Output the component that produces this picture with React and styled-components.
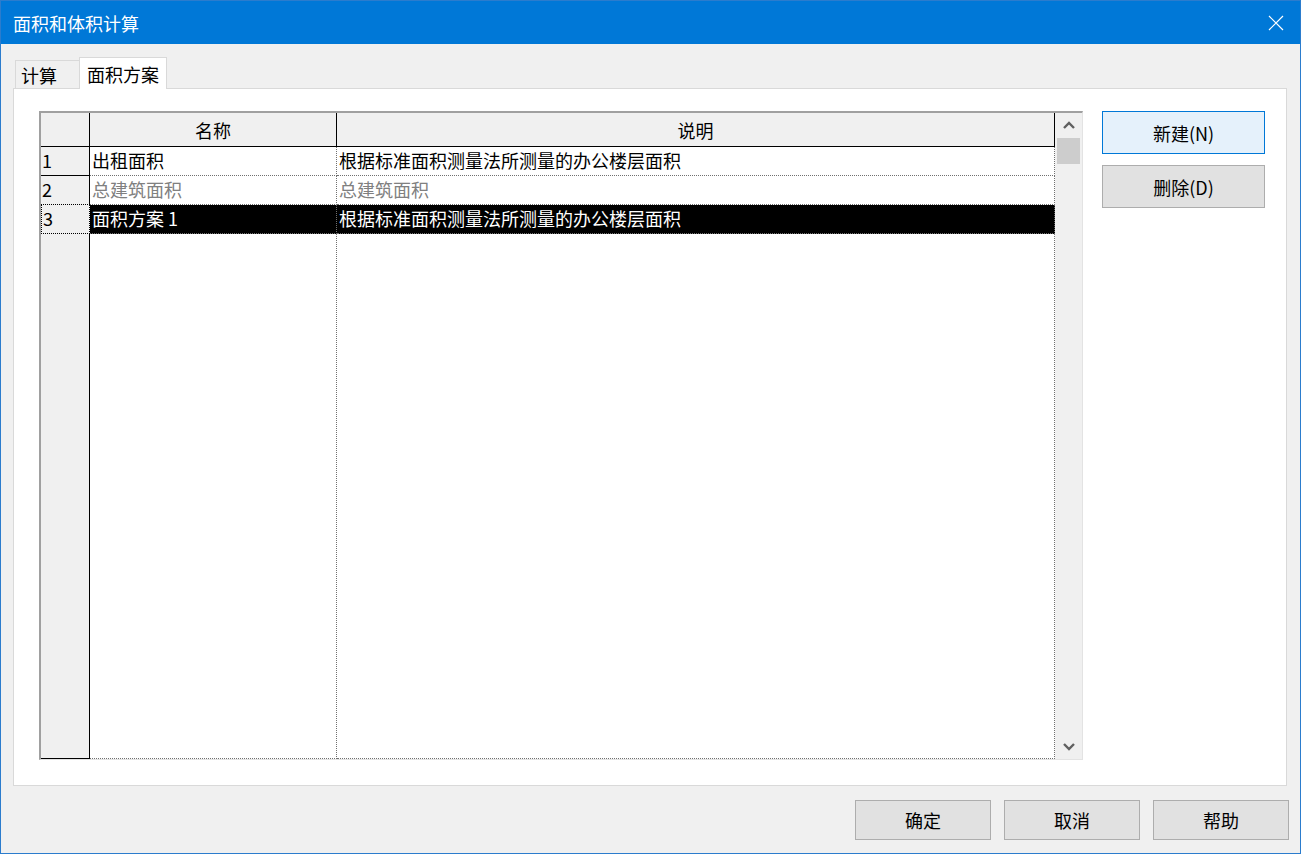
import React from 'react'
import styled, { createGlobalStyle } from 'styled-components'

const GlobalStyle = createGlobalStyle`
  html, body {
    margin: 0;
    padding: 0;
  }
  body {
    font-family: "Noto Sans CJK SC", "Noto Sans", sans-serif;
    font-size: 18px;
    color: #000;
    background: #fff;
  }
`

const Window = styled.div`
  width: 1301px;
  height: 854px;
  box-sizing: border-box;
  border: 1px solid #2b7ccd;
  background: #f0f0f0;
  display: flex;
  flex-direction: column;
`

const TitleBar = styled.div`
  height: 43px;
  background: #0078d7;
  color: #fff;
  display: flex;
  align-items: center;
  justify-content: space-between;
  padding: 0 16px 0 12px;
  font-size: 18px;
  line-height: 1;
`

const Body = styled.div`
  flex: 1;
  display: flex;
  flex-direction: column;
  padding: 13px 13px 13px 12px;
`

const TabStrip = styled.div`
  height: 31px;
  display: flex;
  align-items: flex-end;
  padding-left: 2px;
  position: relative;
  z-index: 1;
`

const Tab = styled.div`
  box-sizing: border-box;
  width: ${p => (p.$active ? '88px' : '65px')};
  height: ${p => (p.$active ? '32px' : '28px')};
  margin-bottom: ${p => (p.$active ? '-1px' : '0')};
  margin-right: ${p => (p.$active ? '0' : '-1px')};
  padding: 0 0 0 ${p => (p.$active ? '7px' : '5px')};
  background: ${p => (p.$active ? '#fff' : '#f0f0f0')};
  border: 1px solid #d9d9d9;
  border-bottom: none;
  display: flex;
  align-items: center;
  line-height: 1;
`

const Panel = styled.div`
  height: 698px;
  box-sizing: border-box;
  background: #fff;
  border: 1px solid #d9d9d9;
  padding: 22px 21px 25px 25px;
  display: flex;
  gap: 19px;
`

const GridFrame = styled.div`
  width: 1044px;
  height: 649px;
  box-sizing: border-box;
  border-top: 2px solid #a0a0a0;
  border-left: 2px solid #a0a0a0;
  border-right: 1px solid #e3e3e3;
  border-bottom: 1px solid #e3e3e3;
  display: flex;
`

const Table = styled.div`
  display: grid;
  grid-template-columns: 49px 247px 718px;
  grid-template-rows: 34px 29px 29px 29px 1fr;
`

const HeadCell = styled.div`
  box-sizing: border-box;
  background: #f0f0f0;
  border-right: 1px solid #000;
  border-bottom: 1px solid #000;
  display: flex;
  align-items: center;
  justify-content: center;
  line-height: 1;
`

const RowHead = styled.div`
  box-sizing: border-box;
  background: #f0f0f0;
  border-right: 1px ${p => (p.$focus ? 'dotted' : 'solid')} #000;
  border-bottom: 1px ${p => (p.$focus ? 'dotted' : 'solid')} #000;
  border-top: ${p => (p.$focus ? '1px dotted #000' : 'none')};
  border-left: ${p => (p.$focus ? '1px dotted #000' : 'none')};
  margin-top: ${p => (p.$focus ? '-1px' : '0')};
  display: flex;
  align-items: center;
  padding: 0 0 3px 1px;
  line-height: 1;
`

const Cell = styled.div`
  box-sizing: border-box;
  background: ${p => (p.$selected ? '#000' : '#fff')};
  color: ${p => (p.$selected ? '#fff' : p.$muted ? '#808080' : '#000')};
  border-right: 1px dotted #707070;
  border-bottom: 1px dotted #707070;
  display: flex;
  align-items: center;
  padding: 0 0 3px 2px;
  white-space: nowrap;
  line-height: 1;
`

const Scrollbar = styled.div`
  width: 27px;
  background: #f0f0f0;
  display: flex;
  flex-direction: column;
  align-items: center;
`

const ArrowBox = styled.div`
  height: 25px;
  display: flex;
  align-items: center;
  justify-content: center;
`

const Track = styled.div`
  flex: 1;
  width: 23px;
`

const Thumb = styled.div`
  width: 23px;
  height: 26px;
  background: #cdcdcd;
`

const SideButtons = styled.div`
  display: flex;
  flex-direction: column;
  gap: 11px;
`

const Button = styled.button`
  box-sizing: border-box;
  width: ${p => p.$w || '163px'};
  height: ${p => p.$h || '43px'};
  background: ${p => (p.$default ? '#e5f1fb' : '#e1e1e1')};
  border: 1px solid ${p => (p.$default ? '#0078d7' : '#adadad')};
  font-family: inherit;
  font-size: 18px;
  color: #000;
  padding: 0;
  line-height: 1;
`

const Footer = styled.div`
  margin-top: 14px;
  display: flex;
  justify-content: flex-end;
  gap: 13px;
  margin-right: -2px;
`

const Chevron = ({ down }) => (
  <svg width="12" height="9" viewBox="0 0 12 9">
    <path
      d={down ? 'M1 2 L6 7 L11 2' : 'M1 7 L6 2 L11 7'}
      fill="none"
      stroke="#606060"
      strokeWidth="2.4"
    />
  </svg>
)

const CloseIcon = () => (
  <svg width="16" height="16" viewBox="0 0 16 16">
    <path d="M1 1 L15 15 M15 1 L1 15" stroke="#fff" strokeWidth="1.2" />
  </svg>
)

const rows = [
  { n: '1', name: '出租面积', desc: '根据标准面积测量法所测量的办公楼层面积' },
  { n: '2', name: '总建筑面积', desc: '总建筑面积', muted: true },
  { n: '3', name: '面积方案 1', desc: '根据标准面积测量法所测量的办公楼层面积', selected: true },
]

const App = () => {
  return (
    <>
      <GlobalStyle />
      <Window>
        <TitleBar>
          <span>面积和体积计算</span>
          <CloseIcon />
        </TitleBar>
        <Body>
          <TabStrip>
            <Tab>计算</Tab>
            <Tab $active>面积方案</Tab>
          </TabStrip>
          <Panel>
            <GridFrame>
              <Table>
                <HeadCell />
                <HeadCell>名称</HeadCell>
                <HeadCell>说明</HeadCell>
                {rows.map(r => (
                  <React.Fragment key={r.n}>
                    <RowHead $focus={r.selected}>{r.n}</RowHead>
                    <Cell $selected={r.selected} $muted={r.muted}>{r.name}</Cell>
                    <Cell $selected={r.selected} $muted={r.muted}>{r.desc}</Cell>
                  </React.Fragment>
                ))}
                <RowHead />
                <Cell />
                <Cell />
              </Table>
              <Scrollbar>
                <ArrowBox><Chevron /></ArrowBox>
                <Track>
                  <Thumb />
                </Track>
                <ArrowBox><Chevron down /></ArrowBox>
              </Scrollbar>
            </GridFrame>
            <SideButtons>
              <Button $default>新建(N)</Button>
              <Button>删除(D)</Button>
            </SideButtons>
          </Panel>
          <Footer>
            <Button $w="136px" $h="40px">确定</Button>
            <Button $w="136px" $h="40px">取消</Button>
            <Button $w="136px" $h="40px">帮助</Button>
          </Footer>
        </Body>
      </Window>
    </>
  )
}

export default App
